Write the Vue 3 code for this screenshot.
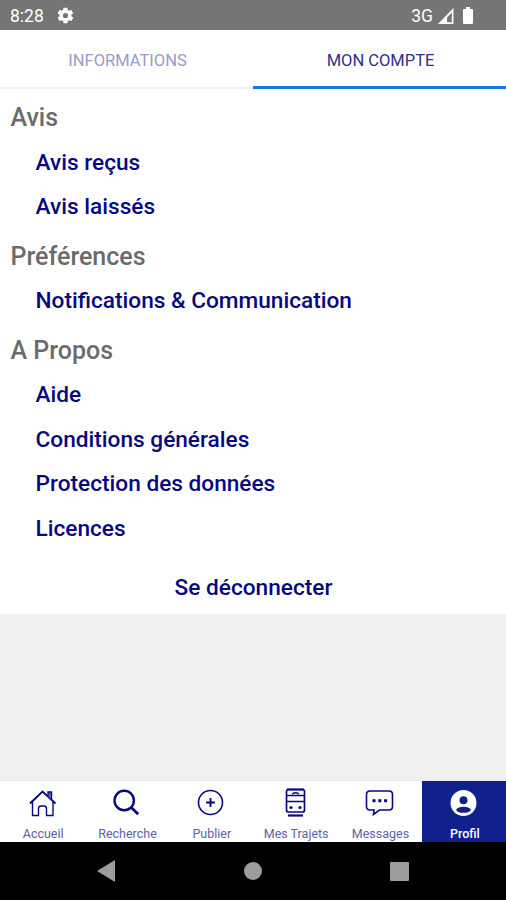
<script setup>
const sections = [
  { title: 'Avis', items: ['Avis reçus', 'Avis laissés'] },
  { title: 'Préférences', items: ['Notifications & Communication'] },
  { title: 'A Propos', items: ['Aide', 'Conditions générales', 'Protection des données', 'Licences'] },
]
const nav = [
  { id: 'home', label: 'Accueil' },
  { id: 'search', label: 'Recherche' },
  { id: 'publish', label: 'Publier' },
  { id: 'trips', label: 'Mes Trajets' },
  { id: 'messages', label: 'Messages' },
  { id: 'profile', label: 'Profil', active: true },
]
</script>

<template>
  <div class="screen">
    <header class="status">
      <span class="time">8:28</span>
      <svg class="gear" viewBox="0 0 24 24" width="19" height="19"><path fill="#fff" fill-rule="evenodd" d="M19.4 13a7.700 7.700 0 0 0 0-2l2.100-1.600a.5.5 0 0 0 .1-.6l-2-3.500a.5.5 0 0 0-.6-.2l-2.500 1a7.300 7.300 0 0 0-1.700-1l-.4-2.600a.5.5 0 0 0-.5-.4h-4a.5.5 0 0 0-.5.4L9 5.100a7.700 7.700 0 0 0-1.700 1l-2.500-1a.5.5 0 0 0-.6.2l-2 3.500a.5.5 0 0 0 .1.6L4.500 11a7.900 7.900 0 0 0 0 2l-2.100 1.600a.5.5 0 0 0-.1.6l2 3.500c.1.2.4.3.6.2l2.500-1c.5.4 1.100.7 1.700 1l.4 2.600c0 .2.200.4.5.4h4c.3 0 .5-.2.5-.4l.4-2.600c.6-.3 1.200-.6 1.700-1l2.500 1c.2.1.5 0 .6-.2l2-3.500a.5.5 0 0 0-.1-.6zM12 15.300a3.300 3.300 0 1 1 0-6.600 3.300 3.300 0 0 1 0 6.600z" /></svg>
      <span class="network">3G</span>
      <svg class="signal" viewBox="0 0 16 16" width="16" height="16"><path fill="#fff" fill-rule="evenodd" d="M0 16 15.500 0v16zM9 14.300h4.800V4.500L9 9.500z" /></svg>
      <svg class="battery" viewBox="0 0 10 17" width="10" height="17"><path fill="#fff" d="M3 0h4v2h2q1 0 1 1v13q0 1-1 1H1q-1 0-1-1V3q0-1 1-1h2z" /></svg>
    </header>

    <div class="tabs">
      <button class="tab"><span>INFORMATIONS</span></button>
      <button class="tab selected"><span>MON COMPTE</span></button>
    </div>

    <main class="body">
      <div class="account">
        <section v-for="s in sections" :key="s.title">
          <h2>{{ s.title }}</h2>
          <a v-for="i in s.items" :key="i" class="item">{{ i }}</a>
        </section>
        <a class="logout">Se déconnecter</a>
      </div>
    </main>

    <nav class="nav">
      <a v-for="n in nav" :key="n.id" class="nav-item" :class="{ active: n.active }">
        <svg v-if="n.id === 'home'" viewBox="0 0 30 30" class="icon">
          <path d="M2 15.500 14.500 3.500 27.500 15.500" stroke-width="1.900" />
          <path d="M20 8V4h3.500v7.500" class="chimney" stroke-width="1.400" />
          <path d="M4.500 14v13.500h6V20.500q0-2.500 2.500-2.500h3q2.500 0 2.500 2.500v7h6.500V14" stroke-width="1.400" />
        </svg>
        <svg v-else-if="n.id === 'search'" viewBox="0 0 30 30" class="icon">
          <circle cx="12.200" cy="12.500" r="9.700" stroke-width="2.400" /><path d="m19 19.300 7.200 7" stroke-width="2.700" />
        </svg>
        <svg v-else-if="n.id === 'publish'" viewBox="0 0 30 30" class="icon">
          <circle cx="13.500" cy="14.500" r="12" stroke-width="1.600" /><path d="M13.500 10v9M9 14.500h9" stroke-width="1.900" />
        </svg>
        <svg v-else-if="n.id === 'trips'" viewBox="0 0 30 30" class="icon">
          <rect x="5.500" y="1.500" width="18" height="22.500" rx="2" stroke-width="1.700" />
          <path d="M6 1.500h17" stroke-width="2" />
          <path d="M6 7.500h17M6 13.500h17M11 6q3.500-2.500 7 0" stroke-width="1.300" />
          <path d="M7 27.500h15" stroke-width="2.200" />
          <circle cx="10" cy="19.500" r="1.600" class="dot" /><circle cx="19" cy="19.500" r="1.600" class="dot" />
        </svg>
        <svg v-else-if="n.id === 'messages'" viewBox="0 0 30 30" class="icon">
          <path d="M5 3h19q3.500 0 3.500 3.500v12q0 3.500-3.500 3.500H14.500L8.500 26.500l.5-4.500H5q-3.500 0-3.500-3.500v-12Q1.500 3 5 3z" stroke-width="1.600" />
          <path class="dot" d="M7.500 11.200h3v3h-3zM13.300 11.200h3v3h-3zM19.100 11.200h3v3h-3z" />
        </svg>
        <svg v-else viewBox="0 0 30 30" class="icon">
          <circle cx="13.500" cy="15" r="13" class="disc" /><circle cx="13.500" cy="12.300" r="4" class="cutout" />
          <ellipse cx="13.500" cy="21.800" rx="7.300" ry="3" class="cutout" />
        </svg>
        <span class="nav-label">{{ n.label }}</span>
      </a>
    </nav>

    <footer class="system">
      <svg viewBox="0 0 18 22" width="18" height="22"><path fill="#9c9c9c" d="M0 11 18 0v22z" /></svg>
      <i class="sys-home"></i>
      <i class="sys-recent"></i>
    </footer>
  </div>
</template>

<style>
body { margin: 0; }
</style>

<style scoped>
.screen { width: 506px; height: 900px; display: flex; flex-direction: column; overflow: hidden; background: #f0f0f0; font-family: Roboto, sans-serif; color: #09097f; }
.status { height: 30px; flex: none; box-sizing: border-box; display: flex; align-items: center; padding: 1px 33px 0 10px; background: #757575; color: #fff; }
.time { font-size: 17.500px; width: 46px; font-weight: 400; }
.network { margin-left: auto; font-size: 17.500px; font-weight: 400; }
.signal { margin-left: 5px; }
.battery { margin-left: 9px; }
.tabs { height: 59px; flex: none; display: flex; background: #fff; }
.tab { flex: 1; border: 0; border-bottom: 2px solid #f0f0f0; padding: 4px 0 0 2px; margin: 0; background: none; font: 400 16.500px Roboto, sans-serif; color: #9a9ace; }
.tab.selected { border-bottom: 3px solid #1c76dc; color: #30308e; }
.body { flex: 1; min-height: 0; }
.account { height: 525px; background: #fff; }
h2 { box-sizing: border-box; height: 49.500px; margin: 0; padding: 7px 0 0 10.500px; line-height: 43.500px; font-size: 25px; font-weight: 500; color: #6b6b6b; white-space: nowrap; }
.item { display: block; box-sizing: border-box; height: 44.500px; padding: 2px 0 0 35.500px; line-height: 43px; font-size: 22.650px; font-weight: 500; white-space: nowrap; }
.logout { display: block; padding: 17px 0 0 1px; line-height: 44.500px; text-align: center; font-size: 22.650px; font-weight: 500; }
.nav { height: 61px; flex: none; display: grid; grid-template-columns: repeat(6, 1fr); background: #fff; box-shadow: 0 -1px 0 #e8e8e8; }
.nav-item { display: flex; flex-direction: column; align-items: center; padding: 7px 0 0 2px; }
.nav-item.active { background: #10208c; color: #fff; }
.icon { width: 30px; height: 30px; fill: none; stroke: currentColor; }
.dot { fill: currentColor; stroke: none; }
.chimney { fill: #6b6bb0; }
.disc { fill: #fff; stroke: none; }
.cutout { fill: #10208c; stroke: none; }
.nav-label { margin-top: 9px; font-size: 12.500px; line-height: 14px; color: #6161a8; white-space: nowrap; }
.active .nav-label { color: #fff; font-weight: 500; }
.system { height: 58px; flex: none; box-sizing: border-box; display: flex; align-items: center; padding: 0 97px; justify-content: space-between; background: #000; }
.sys-home { width: 18px; height: 18px; border-radius: 50%; background: #9c9c9c; }
.sys-recent { width: 19px; height: 19px; border-radius: 1px; background: #9c9c9c; }
</style>
